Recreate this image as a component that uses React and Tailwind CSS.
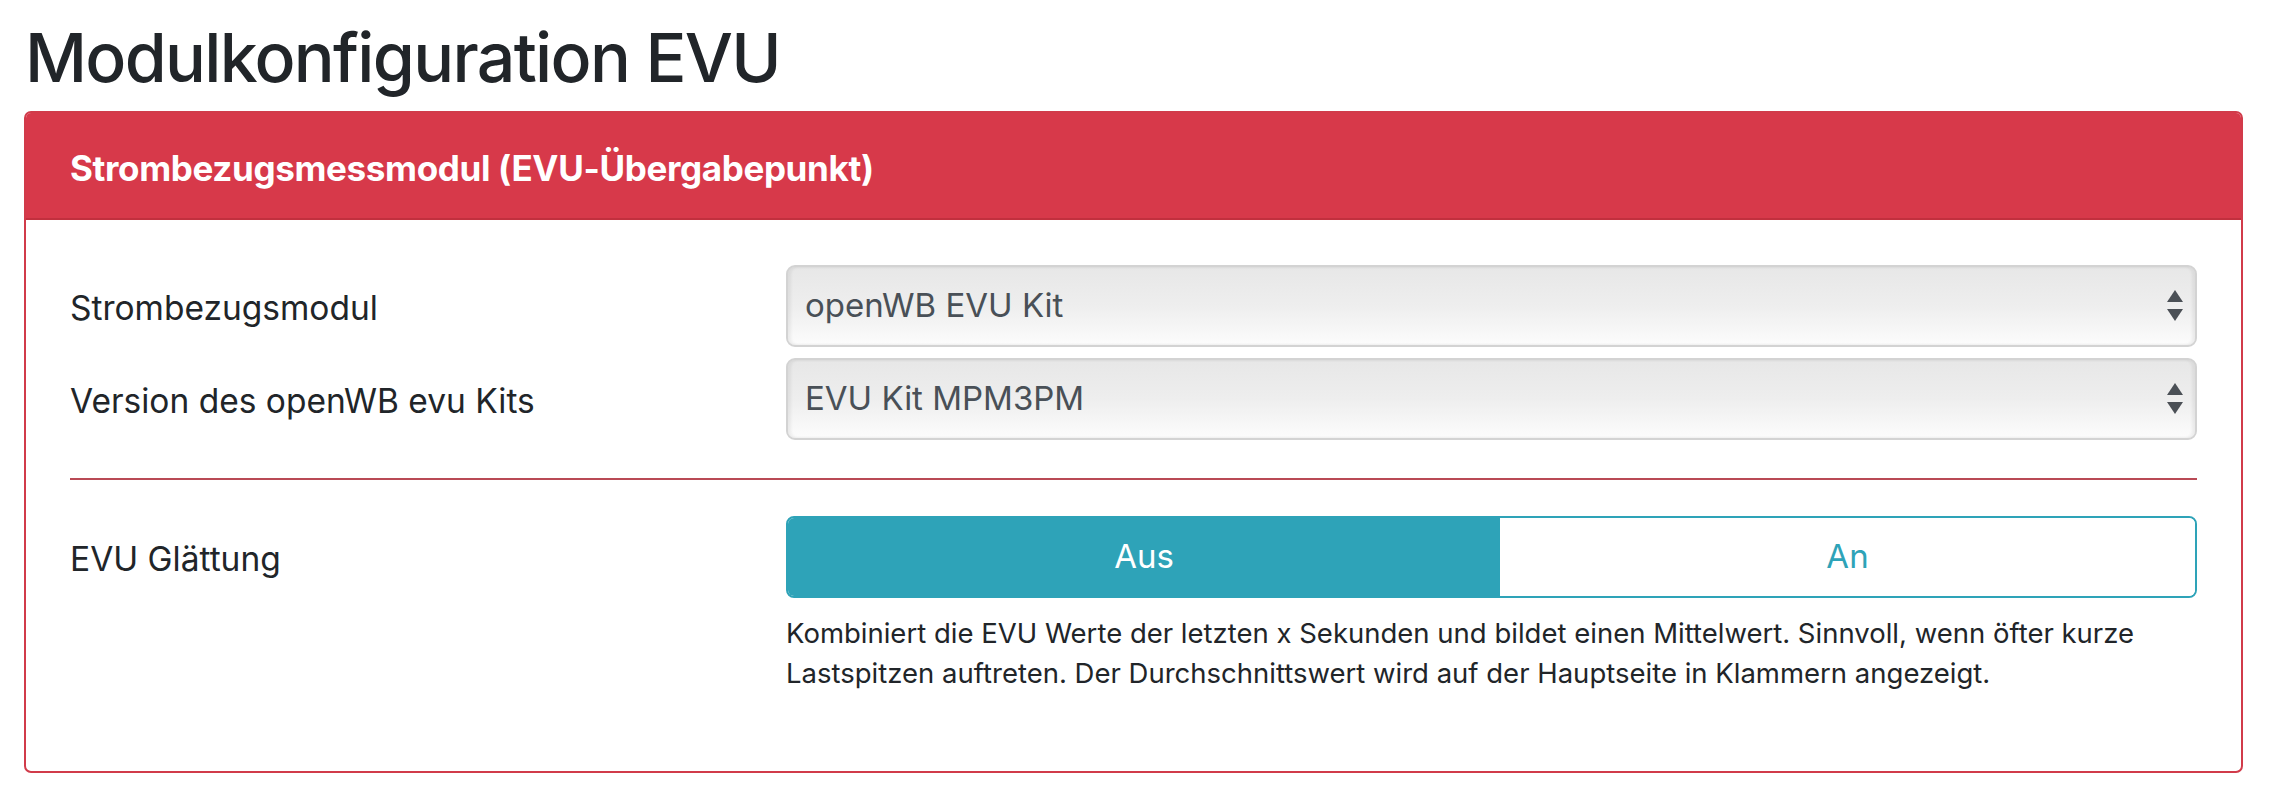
import React from "react";

function Arrows() {
  return (
    <svg width="16" height="32" viewBox="0 0 16 32" className="shrink-0">
      <polygon points="0,12 8,0 16,12" fill="#4b5056" />
      <polygon points="0,19 16,19 8,31" fill="#4b5056" />
    </svg>
  );
}

function Select({ value }) {
  return (
    <div className="flex-1 h-[82px] flex items-center justify-between pl-[17px] pr-[12px] border-2 border-[#d3d3d3] rounded-[9px] bg-linear-to-b from-[#e7e7e7] via-[#eeeeee] to-[#fcfcfc] shadow-[inset_3px_0_3px_rgba(0,0,0,0.06),inset_-3px_0_3px_rgba(0,0,0,0.06)]">
      <span className="text-[33px] text-[#495057]">{value}</span>
      <Arrows />
    </div>
  );
}

export default function App() {
  return (
    <div className="bg-white w-[2274px] h-[800px] font-['Inter',sans-serif] text-[#212529]">
      <div className="ml-[24px] mr-[31px] pt-[15px]">
        <h1 className="pl-[1px] text-[68px] leading-[84px] font-medium tracking-tight text-[#212529]">
          Modulkonfiguration EVU
        </h1>
        <div className="mt-[12px] border-2 border-[#d13b4a] rounded-[7px] overflow-hidden">
          <div className="h-[107px] bg-[#d7394a] border-b-2 border-[#c1303e] pt-[34px] pl-[44px]">
            <span className="text-[35px] leading-[42px] font-bold text-white tracking-[-0.01em]">
              Strombezugsmessmodul (EVU-Übergabepunkt)
            </span>
          </div>
          <div className="px-[44px] pt-[45px] pb-[78px]">
            <div className="flex items-center">
              <div className="w-[716px] pt-[4px] text-[33.5px]">Strombezugsmodul</div>
              <Select value="openWB EVU Kit" />
            </div>
            <div className="flex items-center mt-[11px]">
              <div className="w-[716px] pt-[4px] text-[33.5px]">Version des openWB evu Kits</div>
              <Select value="EVU Kit MPM3PM" />
            </div>
            <div className="mt-[38px] h-[2px] bg-[#b94a55]" />
            <div className="flex items-start mt-[36px]">
              <div className="w-[716px] h-[82px] pt-[4px] flex items-center text-[33.5px]">EVU Glättung</div>
              <div className="flex-1">
                <div className="flex h-[82px] border-2 border-[#2ea3b8] rounded-[8px] overflow-hidden">
                  <div className="w-[712px] bg-[#2ea3b8] text-white text-[33px] flex items-center justify-center">
                    Aus
                  </div>
                  <div className="flex-1 bg-white text-[#2ea3b8] text-[33px] flex items-center justify-center">
                    An
                  </div>
                </div>
                <p className="mt-[15px] text-[27.5px] leading-[40px] text-[#212529]">
                  Kombiniert die EVU Werte der letzten x Sekunden und bildet einen Mittelwert. Sinnvoll, wenn öfter kurze Lastspitzen auftreten. Der Durchschnittswert wird auf der Hauptseite in Klammern angezeigt.
                </p>
              </div>
            </div>
          </div>
        </div>
      </div>
    </div>
  );
}
